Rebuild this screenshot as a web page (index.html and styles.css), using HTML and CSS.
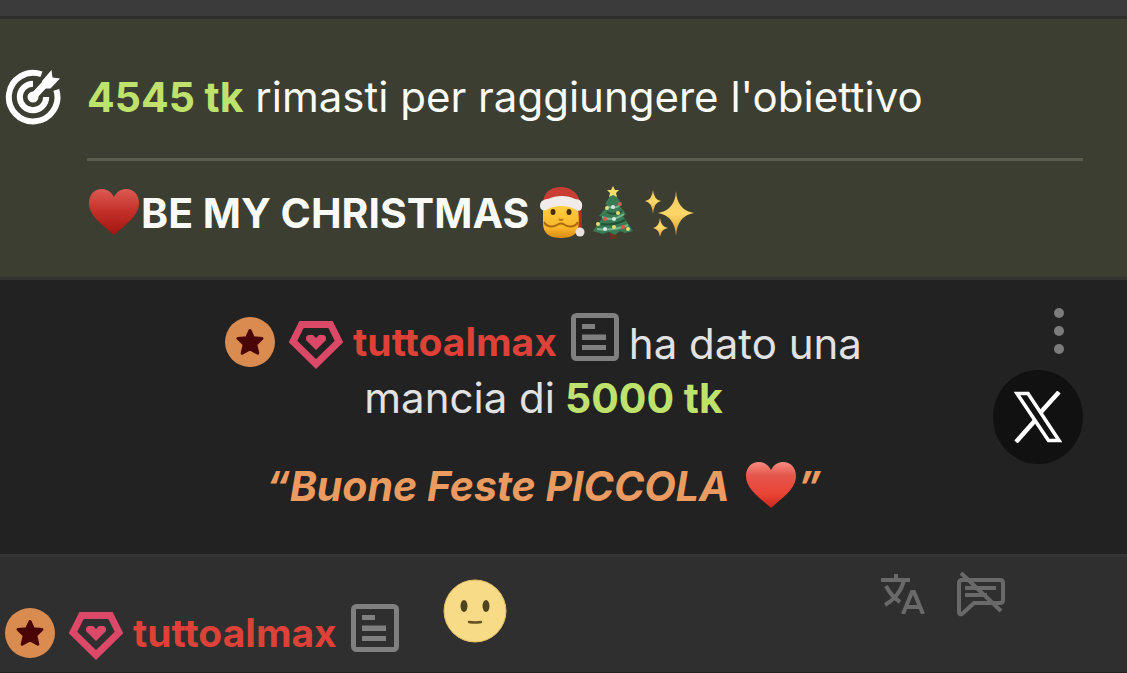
FILE: index.html
```html
<!DOCTYPE html>
<html lang="it">
<head>
  <meta charset="UTF-8">
  <meta name="viewport" content="width=device-width, initial-scale=1">
  <title>Chat</title>
  <link rel="stylesheet" href="styles.css">
</head>
<body>
  <svg class="defs" aria-hidden="true">
    <defs>
      <linearGradient id="heart-dark" x1="0" y1="0" x2="0" y2="1">
        <stop offset="0" stop-color="#dc5a52"/>
        <stop offset="0.5" stop-color="#c22f28"/>
        <stop offset="1" stop-color="#a11510"/>
      </linearGradient>
      <linearGradient id="heart-light" x1="0" y1="0" x2="0" y2="1">
        <stop offset="0" stop-color="#f58c80"/>
        <stop offset="0.3" stop-color="#e4564b"/>
        <stop offset="0.7" stop-color="#ea4436"/>
        <stop offset="1" stop-color="#c9261d"/>
      </linearGradient>
      <linearGradient id="skin" x1="0" y1="0" x2="0" y2="1">
        <stop offset="0" stop-color="#ffd043"/>
        <stop offset="0.7" stop-color="#f9b62a"/>
        <stop offset="1" stop-color="#d98a12"/>
      </linearGradient>
      <linearGradient id="gold" x1="0" y1="0" x2="0" y2="1">
        <stop offset="0" stop-color="#f3c65c"/>
        <stop offset="0.5" stop-color="#ffd768"/>
        <stop offset="1" stop-color="#d9982f"/>
      </linearGradient>
    </defs>
    <symbol id="heart" viewBox="0 0 50 50">
      <path d="M25 9C22 3 17 1 13 1C5 1 0 7 0 15C0 28 14 37 25 47C36 37 50 28 50 15C50 7 45 1 37 1C33 1 28 3 25 9Z"/>
    </symbol>
    <symbol id="star" viewBox="0 0 50 50">
      <circle cx="25" cy="25" r="25" fill="#da8c50"/>
      <path d="M25 13.5L28.4 20.8L37 21.5L30.8 27.5L32.8 36.2L25 32L17.2 36.2L19.2 27.5L13 21.5L21.6 20.8Z" fill="#4a0606" stroke="#4a0606" stroke-width="3" stroke-linejoin="round"/>
    </symbol>
    <symbol id="gem" viewBox="0 0 54 48">
      <path d="M12.5 3.5H41.5L50 20.5L27 43L4 20.5Z" fill="none" stroke="#dc4868" stroke-width="7"/>
      <path d="M19 14H24L27 17L30 14H35L37 16V19L27 29L17 19V16Z" fill="#dc4868"/>
    </symbol>
    <symbol id="note" viewBox="0 0 48 48">
      <rect x="2.5" y="2.5" width="43" height="43" rx="3" fill="none" stroke="#808080" stroke-width="5"/>
      <path d="M11 11H24V16H11ZM11 21.5H35V27H11ZM11 32H35V37H11Z" fill="#808080"/>
    </symbol>
  </svg>

  <header class="topbar"></header>

  <main>
    <section class="goal">
      <svg class="goal-icon" viewBox="0 0 56 56" aria-hidden="true">
        <g fill="none" stroke="#fff" stroke-width="6">
          <path d="M36.5 5.3A24.3 24.3 0 1 0 51.3 20.8"/>
          <path d="M28 14.8A13.2 13.2 0 1 0 41.2 28"/>
        </g>
        <circle cx="28" cy="28" r="5.5" fill="#fff"/>
        <path d="M28 28L41 14" stroke="#fff" stroke-width="7"/>
        <path d="M37 12L46.5 1L47.5 8.5L55 9.5L45.5 19.5H37Z" fill="#fff"/>
      </svg>
      <div class="goal-body">
        <p class="goal-left"><strong class="tokens">4545 tk</strong> rimasti per raggiungere l'obiettivo</p>
        <p class="goal-title">
          <svg class="emoji-heart" fill="url(#heart-dark)" role="img" aria-label="cuore"><use href="#heart"/></svg><span>BE MY CHRISTMAS</span>
          <svg class="emoji-santa" viewBox="0 0 46 52" role="img" aria-label="Babbo Natale">
            <path d="M4 17H40V36C40 47 33 51 22 51S4 47 4 36Z" fill="url(#skin)"/>
            <path d="M38 15C43 25 41 34 41 43" fill="none" stroke="#b32d25" stroke-width="3"/>
            <path d="M4 14C6 3 14 0 22 0S39 5 41 15L38 18H5Z" fill="#c83e32"/>
            <path d="M1 19C1 14 5 12 9 12C17 8 29 8 36 12C41 12 44 15 43 20C43 24 39 25 36 22C27 18 17 18 9 22C5 25 1 23 1 19Z" fill="#f1ece9"/>
            <ellipse cx="14" cy="25" rx="2.5" ry="3" fill="#4b2a12"/>
            <ellipse cx="30" cy="25" rx="2.5" ry="3" fill="#4b2a12"/>
            <path d="M20 32Q22 34 24 32" fill="none" stroke="#b97914" stroke-width="2"/>
            <path d="M5 35C8 41 15 40 18 38Q22 35 26 38C29 40 36 41 39 35" fill="none" stroke="#a9690c" stroke-width="2"/>
            <circle cx="41" cy="45" r="4.5" fill="#e9e1dd"/>
          </svg>
          <svg class="emoji-tree" viewBox="0 0 40 54" role="img" aria-label="albero di Natale">
            <path d="M17 44H24V53H17Z" fill="#66331e"/>
            <path d="M20 5L28 17L25 18L33 28L30 30L40 45L32 47L27 45L22 49L16 46L10 48L0 45L10 31L6 30L15 19L12 18Z" fill="#397b54"/>
            <path d="M14 20Q21 24 27 19M9 31Q20 36 31 28M4 43Q21 45 35 39" fill="none" stroke="#74b68b" stroke-width="2"/>
            <path d="M14 26Q21 30 29 25M8 38Q20 40 32 34" fill="none" stroke="#215238" stroke-width="2"/>
            <path d="M20 0L22 4L26 4L23 7L24 11L20 9L16 11L17 7L14 4L18 4Z" fill="#f1dc6c"/>
            <g fill="#e6dc70"><circle cx="14" cy="22" r="2"/><circle cx="25" cy="27" r="2"/><circle cx="5" cy="38" r="2"/><circle cx="21" cy="41" r="2"/><circle cx="35" cy="43" r="2"/></g>
            <g fill="#d5564a"><circle cx="27" cy="18" r="2"/><circle cx="12" cy="33" r="2"/><circle cx="30" cy="41" r="2"/></g>
            <g fill="#dce6e7"><circle cx="20" cy="21" r="2"/><circle cx="21" cy="33" r="2"/><circle cx="12" cy="43" r="2"/></g>
          </svg>
          <svg class="emoji-sparkles" viewBox="0 0 50 48" fill="url(#gold)" role="img" aria-label="scintille">
            <path d="M31 2Q32 21 49 24Q32 27 31 47Q30 27 13 24Q30 21 31 2Z"/>
            <path d="M8 1Q9 11 16 12Q9 13 8 25Q7 13 0 12Q7 11 8 1Z"/>
            <path d="M15 29Q16 38 23 39Q16 40 15 48Q14 40 8 39Q14 38 15 29Z"/>
          </svg>
        </p>
      </div>
    </section>

    <section class="tip">
      <div class="tip-text">
        <p class="tip-line">
          <span class="user">
            <svg class="star"><use href="#star"/></svg>
            <svg class="gem"><use href="#gem"/></svg>
            <a class="username" href="#tuttoalmax">tuttoalmax</a>
            <svg class="note"><use href="#note"/></svg>
          </span>
          <span>ha dato una</span>
        </p>
        <p class="tip-line">mancia di <strong class="tokens">5000 tk</strong></p>
        <p class="quote"><span>“Buone Feste PICCOLA</span><svg class="emoji-heart" fill="url(#heart-light)" role="img" aria-label="cuore"><use href="#heart"/></svg><span>”</span></p>
      </div>
      <div class="tip-actions">
        <button class="more" type="button" aria-label="Altro">
          <svg viewBox="0 0 10 46" fill="#7c7c7c"><circle cx="5" cy="5" r="5"/><circle cx="5" cy="23" r="5"/><circle cx="5" cy="41" r="5"/></svg>
        </button>
        <a class="share" href="#x" aria-label="X">
          <svg viewBox="0 0 48 52" fill="none" stroke="#fff">
            <path d="M3 2.5H14L45 49.500H34.500Z" stroke-width="3.5"/>
            <path d="M45 1L26.500 21.500M2 51L21.500 29" stroke-width="4.5"/>
          </svg>
        </a>
      </div>
    </section>

    <section class="message">
      <span class="user">
        <svg class="star"><use href="#star"/></svg>
        <svg class="gem"><use href="#gem"/></svg>
        <a class="username" href="#tuttoalmax">tuttoalmax</a>
        <svg class="note"><use href="#note"/></svg>
      </span>
      <svg class="smiley" viewBox="0 0 64 64" role="img" aria-label="sorriso">
        <circle cx="32" cy="32" r="31" fill="#f8db87" stroke="#e5bd65"/>
        <ellipse cx="21" cy="27" rx="3.5" ry="6" fill="#4f431f"/>
        <ellipse cx="43" cy="27" rx="3.5" ry="6" fill="#4f431f"/>
        <path d="M26 43Q32 44 38 43" fill="none" stroke="#655322" stroke-width="2.5" stroke-linecap="round"/>
      </svg>
      <div class="message-actions">
        <button type="button" aria-label="Traduci">
          <svg class="translate" viewBox="0 0 44 40" fill="none" stroke="#696969" stroke-width="4">
            <path d="M0 6H29M15 0V6M23 6C21 16 13 26 4 31M5 12C9 20 13 24 19 28"/>
            <path d="M22 40L31 18H33L42 40M25 33H39"/>
          </svg>
        </button>
        <button type="button" aria-label="Silenzia">
          <svg class="mute" viewBox="0 0 48 46" fill="none" stroke="#696969" stroke-width="4">
            <path d="M14 9H43Q46 9 46 12V29Q46 32 43 32H17L5 43Q2 44 2 41V12Q2 9 5 9Z"/>
            <path d="M8 17H39M8 24H30"/>
            <path d="M4 2L44 40"/>
          </svg>
        </button>
      </div>
    </section>
  </main>
</body>
</html>
```

FILE: styles.css
```css
* {
  box-sizing: border-box;
}
body {
  margin: 0;
  min-height: 100vh;
  display: flex;
  flex-direction: column;
  background: #2f2f2f;
  color: #e2e2e2;
  font-family: Inter, sans-serif;
  font-size: 42px;
  line-height: 54px;
}
main {
  flex: 1;
  display: flex;
  flex-direction: column;
}
p {
  margin: 0;
}
a {
  text-decoration: none;
}
svg {
  display: block;
  flex: none;
}
button {
  padding: 0;
  border: 0;
  background: none;
  cursor: pointer;
}
.defs {
  position: absolute;
  width: 0;
  height: 0;
}
.topbar {
  height: 19px;
  background: #3b3b3b;
  border-bottom: 3px solid #2e2f2b;
}
.tokens {
  color: #bfe26c;
  font-size: 41px;
}

/* goal */
.goal {
  display: flex;
  gap: 26px;
  padding: 50px 44px 37px 5px;
  background: #3b3e31;
  border-bottom: 3px solid #333332;
  color: #fafaf7;
}
.goal-icon {
  width: 56px;
  height: 56px;
}
.goal-body {
  flex: 1;
}
.goal-left {
  padding: 1px 0 34px;
  border-bottom: 3px solid #5a5d4e;
}
.goal-title {
  display: flex;
  align-items: center;
  margin-top: 25px;
  font-size: 41px;
  font-weight: 700;
}
.emoji-heart {
  width: 50px;
  height: 50px;
  margin: 0 2px;
}
.emoji-santa {
  width: 46px;
  height: 52px;
  margin-left: 10px;
}
.emoji-tree {
  width: 40px;
  height: 54px;
  margin-left: 8px;
}
.emoji-sparkles {
  width: 50px;
  height: 48px;
  margin-left: 12px;
}

/* tip */
.tip {
  display: grid;
  padding: 33px 44px 41px 4px;
  background: #222;
  border-bottom: 3px solid #353535;
}
.tip-text,
.tip-actions {
  grid-area: 1 / 1;
}
.tip-line {
  display: flex;
  justify-content: center;
  align-items: flex-end;
  gap: 10px;
}
.quote {
  display: flex;
  justify-content: center;
  align-items: center;
  margin-top: 34px;
  color: #eb9b60;
  font-size: 41px;
  font-style: italic;
  font-weight: 700;
}
.quote .emoji-heart {
  margin-left: 16px;
}
.tip-actions {
  justify-self: end;
  display: flex;
  flex-direction: column;
  align-items: flex-end;
  gap: 16px;
}
.more {
  margin: -5px 19px 0 0;
}
.more svg {
  width: 10px;
  height: 46px;
}
.share {
  display: grid;
  place-items: center;
  width: 90px;
  height: 94px;
  border-radius: 50%;
  background: #111;
}
.share svg {
  width: 48px;
  height: 52px;
}

/* user */
.user {
  display: flex;
  align-items: center;
  height: 58px;
}
.star {
  width: 50px;
  height: 50px;
}
.gem {
  width: 54px;
  height: 48px;
  margin: 6px 0 0 14px;
}
.username {
  margin: 0 14px 0 10px;
  color: #dd4137;
  font-size: 39px;
  font-weight: 700;
}
.note {
  align-self: flex-start;
  width: 48px;
  height: 48px;
}

/* message */
.message {
  flex: 1;
  display: flex;
  align-items: flex-start;
  padding: 14px 122px 0 5px;
  border-bottom: 1px solid #222;
}
.message .user {
  margin-top: 33px;
}
.smiley {
  width: 64px;
  height: 64px;
  margin: 8px 0 0 44px;
}
.message-actions {
  display: flex;
  align-items: center;
  gap: 32px;
  margin-left: auto;
}
.translate {
  width: 44px;
  height: 40px;
}
.mute {
  width: 48px;
  height: 46px;
}
```
